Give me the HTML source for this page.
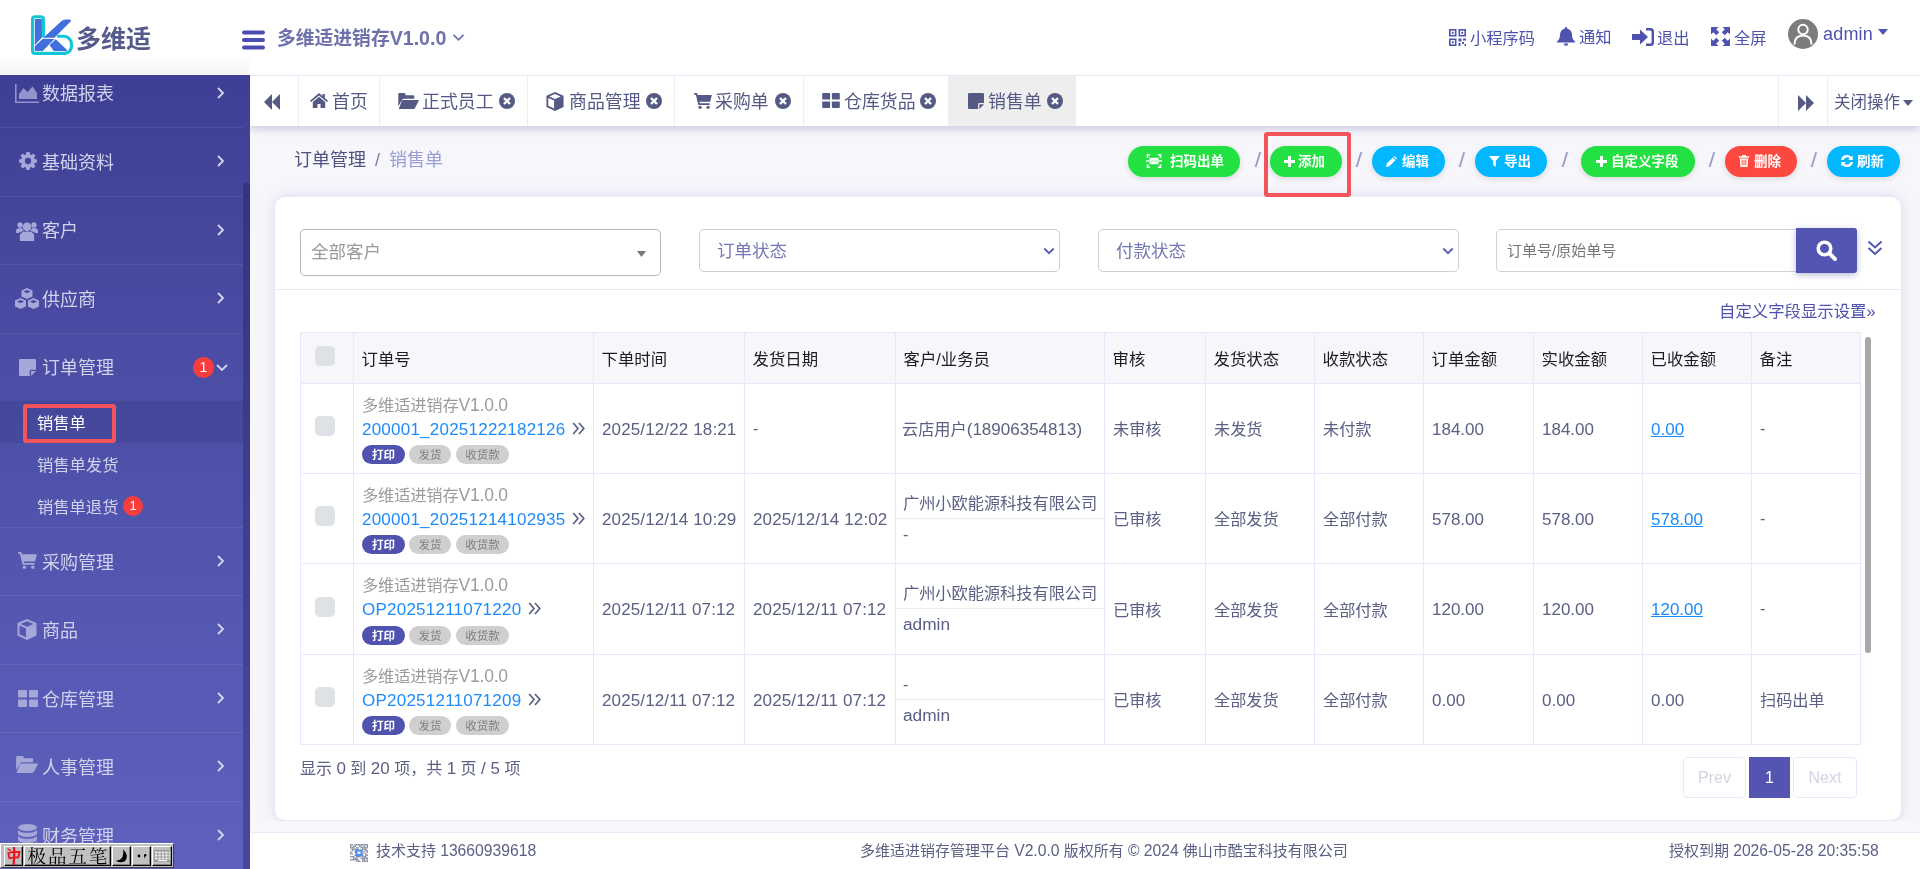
<!DOCTYPE html>
<html lang="zh-CN">
<head>
<meta charset="utf-8">
<title>多维适进销存</title>
<style>
*{box-sizing:border-box;margin:0;padding:0}
html,body{width:1920px;height:869px;overflow:hidden;background:#f6f6fb}
body{font-family:"Liberation Sans","Noto Sans CJK SC",sans-serif;font-size:16px;color:#5b6084;position:relative}
.abs{position:absolute}
body>*{will-change:transform}
svg{display:block}
a{color:inherit;text-decoration:none}

/* ---------- header ---------- */
#hdr{position:absolute;left:0;top:0;width:1920px;height:75px;background:#fff;z-index:5}
#hdr .brand{position:absolute;left:76px;top:19px;font-size:25px;font-weight:700;color:#555a8b;letter-spacing:0;line-height:40px}
#hdr .ttl{position:absolute;left:277px;top:19.200px;font-size:18.800px;font-weight:700;color:#6e71ab;line-height:38px;white-space:nowrap}
#hdr .nav{position:absolute;top:21px;font-size:16.300px;color:#4f52ae;line-height:34px;white-space:nowrap}

/* ---------- sidebar ---------- */
#side{position:absolute;left:0;top:75px;width:250px;height:794px;background:linear-gradient(180deg,#3c3f93 0%,#4a4da3 35%,#575ab4 75%,#5e61bd 100%);overflow:hidden;z-index:3}
#sideshadow{position:absolute;left:0;top:55px;width:250px;height:20px;background:linear-gradient(180deg,rgba(120,120,160,0) 0%,rgba(120,120,160,.07) 100%);z-index:6}
#side .it{position:absolute;left:0;width:243px;height:69px;border-top:1px solid rgba(255,255,255,.08);color:#d0d2ec;font-size:18px;line-height:24px}
#side .it .tx{position:absolute;left:42px;top:22.500px;white-space:nowrap}
#side .it .ic{position:absolute;left:16px;top:24px}
#side .it .ar{position:absolute;left:216px;top:26px}
#side .sub{position:absolute;left:37px;font-size:16.300px;color:#d0d2ee;line-height:22px;white-space:nowrap}
#side .sbar{position:absolute;left:243px;top:108px;width:7px;height:700px;background:rgba(22,22,80,.32);border-radius:4px 4px 0 0}
.bdg{position:absolute;background:#f93c3c;color:#fff;border-radius:50%;width:21px;height:21px;font-size:14px;line-height:21px;text-align:center}

/* ---------- tab bar ---------- */
#tabs{position:absolute;left:250px;top:75px;width:1670px;height:51px;background:#fff;border-top:1px solid #e6e6f5;box-shadow:0 3px 8px rgba(100,100,180,.30);z-index:2}
#tabs .tb{position:absolute;top:0;height:50px;border-right:1px solid #ededf7;font-size:17.900px;color:#555a85;line-height:50px;white-space:nowrap}
#tabs .tb.act{background:#eeeeee}
#tabs .tb span{position:absolute;top:.5px}

/* ---------- page ---------- */
#crumb{position:absolute;left:294px;top:146px;font-size:18px;line-height:28px;color:#4e5380;white-space:nowrap}
#crumb i{font-style:normal;color:#9a9dd6}
.pill{position:absolute;top:146px;height:31px;border-radius:15.500px;color:#fff;font-size:13.500px;font-weight:700;line-height:31.500px;white-space:nowrap;box-shadow:0 2px 6px rgba(0,0,0,.12)}
.pill span{position:absolute;top:0}
.g{background:#24e143}.b{background:#02b7fe}.r{background:#fd4840}
.sl{position:absolute;top:147.500px;font-size:21px;color:#8d90c0;line-height:24px;transform:skewX(-2deg);margin-left:1px}

#card{position:absolute;left:275px;top:197px;width:1626px;height:623px;background:#fff;border-radius:10px;box-shadow:0 0 14px rgba(130,130,200,.26)}
.fsel{position:absolute;height:43px;border:1px solid #d2d2d2;border-radius:5px;background:#fff;font-size:17px;color:#7376b4;line-height:41px;padding-left:17px}

/* ---------- filters ---------- */
.s2{position:absolute;left:300px;top:229px;width:361px;height:47px;border:1px solid #b9b9b9;border-radius:5px;background:#fff;font-size:17.500px;color:#999;line-height:45px;padding-left:10px}
.fs{position:absolute;top:229px;width:361px;height:43px;border:1px solid #cfcfcf;border-radius:5px;background:#fff;font-size:17.500px;color:#7477b5;line-height:42.600px;padding-left:17px}
.fs svg{position:absolute;right:4px;top:16.500px}
.fin{position:absolute;left:1496px;top:229px;width:301px;height:43px;border:1px solid #d2d2d2;border-radius:5px 0 0 5px;font-size:15px;color:#777;line-height:41px;padding-left:10px;background:#fff}
.fbtn{position:absolute;left:1796px;top:228px;width:61px;height:45px;background:#5255b1;border-radius:0 3px 3px 0;box-shadow:0 2px 6px rgba(60,60,140,.35)}
.hr{position:absolute;left:275px;top:289px;width:1625px;height:1px;background:#ebebf8}
.cfg{position:absolute;right:44px;top:298.500px;font-size:16.400px;line-height:24px;color:#4f52ae;white-space:nowrap}

/* ---------- table ---------- */
#tb{position:absolute;left:300px;top:332px;width:1560px;border-collapse:collapse;table-layout:fixed;font-size:16.200px;color:#5b6084}
#tb th,#tb td{border:1px solid #e8e8fb;padding:0 0 0 8px;text-align:left;vertical-align:middle;white-space:nowrap;overflow:hidden}
#tb th{height:51px;background:#f7f7fb;color:#1c1c24;font-weight:400;font-size:16.400px;padding-left:7.500px}
#tb td{height:90px;padding-bottom:1px}
#tb tr.r3 td{height:91px}
#tb td.c,#tb th.c{padding:0}
#tb td.d{font-size:17px;letter-spacing:.13px;padding-top:3px}
#tb .m{font-size:17px;letter-spacing:0}
#tb td.m{padding-top:3px}
.ck{width:20px;height:20px;border-radius:5px;background:#dee2e6;margin-left:14px}
th .ck{margin-top:-4px}
td .ck{margin-top:-5px}
.on{position:relative;height:88px}
.on .a{position:absolute;left:0;top:9.700px;font-size:16.300px;color:#9b9b9b;line-height:22px;letter-spacing:-.2px}
.on .n{position:absolute;left:0;top:33.700px;font-size:17px;color:#1c8bfb;line-height:24px;letter-spacing:.23px}
.on .n svg{display:inline-block;margin-left:6.800px;vertical-align:0}
.tg{position:absolute;top:61px;height:19px;border-radius:9.500px;font-size:11.500px;line-height:20.500px;text-align:center;letter-spacing:0}
.tg.p{left:0;width:43px;background:#4f52ae;color:#fff;font-weight:700}
.tg.q{background:#cfcfcf;color:#808080}
#tb td.cuc{vertical-align:top;padding:0}
.cu{position:relative;height:89px}
.cu div{position:absolute;left:7px;line-height:24px}
.cu i{position:absolute;left:0;top:44px;width:100%;height:1px;background:#ededf8}
a.u{color:#1c8bfb;text-decoration:underline}
.sb{position:absolute;left:1865px;top:337px;width:6px;height:316px;border-radius:3px;background:#a8a8a8}

.info{position:absolute;left:300px;top:757px;font-size:16px;line-height:24px;color:#5b6084;white-space:nowrap}
.info b{font-weight:400;font-size:17px}
.pg{position:absolute;top:757px;height:41px;border:1px solid #e8e8fa;border-radius:4px;font-size:16px;line-height:39px;text-align:center;color:#d3d3e4;background:#fff}
.pg.on1{background:#5355b0;border-color:#5355b0;color:#fff;border-radius:0}

/* ---------- footer ---------- */
#ft{position:absolute;left:250px;top:831.500px;width:1670px;height:38px;background:#fff;border-top:1px solid #e9e9f7;font-size:15px;color:#5b6084;line-height:34px;white-space:nowrap}
#ft div{position:absolute;top:.5px}
#ft b{font-weight:400;font-size:15.700px}
#ime{position:absolute;left:0;top:843px;width:174px;height:25px;background:#c0c0c0;border:1px solid;border-color:#fff #404040 #404040 #fff;z-index:9;font-family:"Liberation Serif","Noto Serif CJK SC",serif;color:#000}
#ime .k{position:absolute;top:2px;height:20px;background:#c0c0c0;border:1px solid;border-color:#fff #000 #000 #fff;box-shadow:inset -1px -1px 0 #808080}
#ime .t{position:absolute;left:2.500px;top:-4.300px;font-weight:400;font-size:18.500px;line-height:28px;letter-spacing:2px;white-space:nowrap}
#ime .v{position:absolute;top:1px;width:2px;height:21px;border-left:1px solid #808080;border-right:1px solid #fff}
</style>
</head>
<body>

<!-- ================= HEADER ================= -->
<div id="hdr">
  <svg class="abs" style="left:28px;top:12px" width="50" height="46" viewBox="0 0 50 46">
    <path d="M15.400 23.900V7.500Q15.400 4.700 12.700 4.700H7.200Q4.500 4.700 4.500 7.500V38.700Q4.500 41.400 7.200 41.400H36.500C41.200 41.400 43.600 37.500 43.600 32.800C43.600 28.200 40.400 24.300 35.800 24.300H30.300" fill="none" stroke="#12c6d6" stroke-width="3.100" stroke-linecap="round" stroke-linejoin="round"/>
    <g fill="#416fdc">
      <path d="M6.800 7.100H13.900V25.400L6.800 33.200z"/>
      <path d="M15.400 25.700L33 9.500Q35 7.600 38 7.500L41.500 7.450Q43.900 7.800 42.600 9.600L26.400 25.800z"/>
      <path d="M6.800 34.300L14.900 26.750L26.400 26.900L14.700 39.100H6.800z"/>
      <path d="M27.800 27.200L39.300 38.300L38.500 39.100H25.750L21.500 33z"/>
    </g>
  </svg>
  <div class="brand">多维适</div>
  <svg class="abs" style="left:242px;top:29.600px" width="23" height="20" viewBox="0 0 23 20"><g fill="#4b4eb0"><rect x="0" y="0.500" width="23" height="4" rx="2"/><rect x="0" y="8" width="23" height="4" rx="2"/><rect x="0" y="15.500" width="23" height="4" rx="2"/></g></svg>
  <div class="ttl">多维适进销存<span style="font-size:19.600px">V1.0.0</span></div>
  <svg class="abs" style="left:452px;top:33.300px" width="13" height="9" viewBox="0 0 13 9"><path d="M1.500 1.800l5 5 5-5" fill="none" stroke="#6e71ab" stroke-width="1.800"/></svg>

  <svg class="abs" style="left:1449px;top:29px" width="17" height="17" viewBox="0 0 17 17"><g fill="none" stroke="#4f52ae" stroke-width="1.600"><rect x=".8" y=".8" width="5.900" height="5.900"/><rect x="10.300" y=".8" width="5.900" height="5.900"/><rect x=".8" y="10.300" width="5.900" height="5.900"/></g><g fill="#4f52ae"><rect x="2.800" y="2.800" width="1.900" height="1.900"/><rect x="12.300" y="2.800" width="1.900" height="1.900"/><rect x="2.800" y="12.300" width="1.900" height="1.900"/><rect x="9.500" y="9.500" width="3" height="3"/><rect x="14" y="9.500" width="3" height="2"/><rect x="9.500" y="14" width="2" height="3"/><rect x="13" y="13" width="2" height="2"/><rect x="15.500" y="15" width="1.500" height="2"/></g></svg>
  <div class="nav" style="left:1470px">小程序码</div>
  <svg class="abs" style="left:1557px;top:27px" width="18" height="19" viewBox="0 0 18 19"><path fill="#4f52ae" d="M9 0a1.300 1.300 0 0 1 1.300 1.300v.5c2.800.6 4.700 3 4.700 6 0 3.500 1 5 3 6.700v1H0v-1c2-1.700 3-3.200 3-6.700 0-3 1.900-5.400 4.700-6v-.5A1.300 1.300 0 0 1 9 0zM6.700 16.500h4.600a2.300 2.300 0 0 1-4.600 0z"/></svg>
  <div class="nav" style="left:1579px;top:20px">通知</div>
  <svg class="abs" style="left:1632px;top:28px" width="22" height="18" viewBox="0 0 22 18"><path fill="#4f52ae" d="M8 1.500l8 7.500-8 7.500V12H0V6h8zM14 0h4.500A3.500 3.500 0 0 1 22 3.500v11a3.500 3.500 0 0 1-3.500 3.500H14v-2.400h4.100a1.500 1.500 0 0 0 1.500-1.500V3.900a1.500 1.500 0 0 0-1.500-1.500H14z"/></svg>
  <div class="nav" style="left:1657px">退出</div>
  <svg class="abs" style="left:1711px;top:27px" width="19" height="19" viewBox="0 0 19 19"><path fill="#4f52ae" d="M0 0h7.500L5.200 2.300l3 3-2.900 2.900-3-3L0 7.500zM19 0v7.500l-2.300-2.300-3 3-2.900-2.900 3-3L11.500 0zM0 19v-7.500l2.300 2.300 3-3 2.900 2.900-3 3L7.500 19zM19 19h-7.500l2.300-2.300-3-3 2.900-2.900 3 3L19 11.500z"/></svg>
  <div class="nav" style="left:1734px">全屏</div>
  <svg class="abs" style="left:1788px;top:19px" width="30" height="30" viewBox="0 0 30 30"><circle cx="15" cy="15" r="15" fill="#7c7c7c"/><circle cx="15" cy="10.500" r="4.700" fill="none" stroke="#fff" stroke-width="2"/><path d="M6.500 25.500c0-6 3.500-9 8.500-9s8.500 3 8.500 9" fill="none" stroke="#fff" stroke-width="2"/></svg>
  <div class="nav" style="left:1823px;top:16.500px;font-size:18px;letter-spacing:.2px">admin</div>
  <svg class="abs" style="left:1878px;top:29px" width="10" height="6" viewBox="0 0 10 6"><path fill="#4f52ae" d="M0 0h10L5 6z"/></svg>
</div>

<div id="sideshadow"></div>
<!-- ================= SIDEBAR ================= -->
<div id="side">
  <div class="it" style="top:-16.5px"><svg class="ic" style="left:15px;top:24px" width="24" height="19" viewBox="0 0 24 19"><path d="M1.600 0v17.400h22.400v1.600H0V0z" fill="#9295cc"/><path d="M4 15V10l4.500-6 4 4 5-5.500L22 9v6z" fill="#9295cc"/></svg><div class="tx">数据报表</div><svg class="ar" width="9" height="14" viewBox="0 0 9 14"><path d="M2 2l5 5-5 5" fill="none" stroke="#d3d5ef" stroke-width="1.800"/></svg></div>
  <div class="it" style="top:52px"><svg class="ic" style="left:19px;top:24px" width="18" height="18" viewBox="0 0 20 20"><path fill="#a4a7d8" fill-rule="evenodd" d="M8.300 0h3.400l.5 2.600 1.500.6 2.200-1.500 2.400 2.400-1.500 2.200.6 1.500 2.600.5v3.400l-2.600.5-.6 1.500 1.500 2.200-2.400 2.400-2.200-1.500-1.500.6-.5 2.600H8.300l-.5-2.600-1.500-.6-2.200 1.500-2.400-2.400 1.500-2.200-.6-1.500L0 11.700V8.300l2.600-.5.6-1.500-1.500-2.200 2.400-2.400 2.200 1.500 1.500-.6zM10 6.500a3.500 3.500 0 1 0 0 7 3.500 3.500 0 0 0 0-7z"/></svg><div class="tx">基础资料</div><svg class="ar" width="9" height="14" viewBox="0 0 9 14"><path d="M2 2l5 5-5 5" fill="none" stroke="#d3d5ef" stroke-width="1.800"/></svg></div>
  <div class="it" style="top:120.5px"><svg class="ic" style="left:16px;top:24px" width="22" height="20" viewBox="0 0 23 21"><g fill="#a4a7d8"><circle cx="11.500" cy="6" r="4.500"/><path d="M4 21v-5.500C4 12.500 7 11 11.500 11S19 12.500 19 15.500V21z"/><circle cx="4.200" cy="4.200" r="2.800"/><circle cx="18.800" cy="4.200" r="2.800"/><path d="M0 12.500V10c0-1.700 1.700-2.600 4.200-2.600.9 0 1.700.1 2.300.4C7 9 7.700 10 8.500 10.500 5 11 3.300 12 3 12.500z"/><path d="M23 12.500V10c0-1.700-1.700-2.600-4.200-2.600-.9 0-1.700.1-2.300.4-.5 1.200-1.200 2.200-2 2.700 3.500.5 5.200 1.500 5.500 2z"/></g></svg><div class="tx">客户</div><svg class="ar" width="9" height="14" viewBox="0 0 9 14"><path d="M2 2l5 5-5 5" fill="none" stroke="#d3d5ef" stroke-width="1.800"/></svg></div>
  <div class="it" style="top:189px"><svg class="ic" style="left:14px;top:23px" width="26" height="22" viewBox="0 0 26 22"><g fill="#a4a7d8"><path d="M13 0l5.500 2.500v6L13 11 7.500 8.500v-6zM13 2L9.500 3.600 13 5.200l3.500-1.600z"/><path d="M6.500 10l5.500 2.500v6L6.500 21 1 18.500v-6zM6.500 12L3 13.600l3.500 1.600 3.500-1.600z"/><path d="M19.500 10l5.500 2.500v6L19.500 21 14 18.500v-6zM19.500 12L16 13.600l3.500 1.600 3.500-1.600z"/></g></svg><div class="tx">供应商</div><svg class="ar" width="9" height="14" viewBox="0 0 9 14"><path d="M2 2l5 5-5 5" fill="none" stroke="#d3d5ef" stroke-width="1.800"/></svg></div>
  <div class="it" style="top:257.5px"><svg class="ic" style="left:19px;top:25px" width="17" height="17" viewBox="0 0 19 19"><path fill="#a4a7d8" d="M1.500 0h16A1.500 1.500 0 0 1 19 1.500V12h-5.500A1.500 1.500 0 0 0 12 13.500V19H1.500A1.500 1.500 0 0 1 0 17.500v-16A1.500 1.500 0 0 1 1.500 0zM13.500 13.500H19L13.500 19z"/></svg><div class="tx">订单管理</div><div class="bdg" style="left:193px;top:23px">1</div><svg class="ar" style="left:215px;top:29px" width="14" height="9" viewBox="0 0 14 9"><path d="M2 2l5 5 5-5" fill="none" stroke="#d3d5ef" stroke-width="1.800"/></svg></div>
  <div class="it" style="top:452px"><svg class="ic" style="left:18px;top:24px" width="19" height="17" viewBox="0 0 21 19"><g fill="#a4a7d8"><path d="M0 0h3.500l.7 2.500H21l-2 8H6.300l.4 1.800H18.500v2H5L2 2H0z"/><circle cx="7" cy="17" r="1.900"/><circle cx="16.500" cy="17" r="1.900"/></g></svg><div class="tx">采购管理</div><svg class="ar" width="9" height="14" viewBox="0 0 9 14"><path d="M2 2l5 5-5 5" fill="none" stroke="#d3d5ef" stroke-width="1.800"/></svg></div>
  <div class="it" style="top:520px"><svg class="ic" style="left:17px;top:23px" width="20" height="21" viewBox="0 0 20 21"><path fill="#a4a7d8" fill-rule="evenodd" d="M10 0l9.500 4v12.500L10 21 .5 16.500V4zM10 2.200L3.600 4.900 10 7.700l6.400-2.800zM2.500 6.500v8.800l6.500 3V9.400z"/></svg><div class="tx">商品</div><svg class="ar" width="9" height="14" viewBox="0 0 9 14"><path d="M2 2l5 5-5 5" fill="none" stroke="#d3d5ef" stroke-width="1.800"/></svg></div>
  <div class="it" style="top:589px"><svg class="ic" style="left:18px;top:25px" width="20" height="17" viewBox="0 0 20 17"><g fill="#a4a7d8"><rect x="0" y="0" width="9" height="7.500" rx="1"/><rect x="11" y="0" width="9" height="7.500" rx="1"/><rect x="0" y="9.500" width="9" height="7.500" rx="1"/><rect x="11" y="9.500" width="9" height="7.500" rx="1"/></g></svg><div class="tx">仓库管理</div><svg class="ar" width="9" height="14" viewBox="0 0 9 14"><path d="M2 2l5 5-5 5" fill="none" stroke="#d3d5ef" stroke-width="1.800"/></svg></div>
  <div class="it" style="top:657px"><svg class="ic" style="left:16px;top:23px" width="22" height="17" viewBox="0 0 23 18"><g fill="#a4a7d8"><path d="M0 15V1.500A1.500 1.500 0 0 1 1.500 0h5A1.500 1.500 0 0 1 8 1.500V2.500h8.500A1.500 1.500 0 0 1 18 4v2.500H6.500c-1 0-1.800.5-2.300 1.400z"/><path d="M5.500 8h17c.5 0 .7.400.4.900L19 16.500c-.4.800-1.200 1.500-2.200 1.500H.5l3.200-8.500C4 8.500 4.700 8 5.500 8z"/></g></svg><div class="tx">人事管理</div><svg class="ar" width="9" height="14" viewBox="0 0 9 14"><path d="M2 2l5 5-5 5" fill="none" stroke="#d3d5ef" stroke-width="1.800"/></svg></div>
  <div class="it" style="top:726px"><svg class="ic" style="left:18px;top:22px" width="19" height="22" viewBox="0 0 19 22"><g fill="#a4a7d8"><ellipse cx="9.500" cy="3.500" rx="9.500" ry="3.500"/><path d="M0 6c1.500 2 5 2.800 9.500 2.800S17.500 8 19 6v3.500c0 1.900-4.300 3.500-9.500 3.500S0 11.400 0 9.500z"/><path d="M0 12c1.500 2 5 2.800 9.500 2.800S17.500 14 19 12v3.500c0 1.900-4.300 3.500-9.500 3.500S0 17.400 0 15.500z"/><path d="M0 17.500c1.500 2 5 2.800 9.500 2.800s8-.8 9.500-2.800V19c0 1.700-4.300 3-9.500 3S0 20.700 0 19z"/></g></svg><div class="tx">财务管理</div><svg class="ar" width="9" height="14" viewBox="0 0 9 14"><path d="M2 2l5 5-5 5" fill="none" stroke="#d3d5ef" stroke-width="1.800"/></svg></div>
  <div class="abs" style="left:0;top:326px;width:243px;height:42px;background:rgba(40,42,110,.20)"></div>
  <div class="sub" style="top:337px;color:#fff">销售单</div>
  <div class="abs" style="left:22.800px;top:329px;width:93.700px;height:39px;border:4.800px solid #f3535a;border-radius:3px"></div>
  <div class="sub" style="top:379px">销售单发货</div>
  <div class="sub" style="top:421px">销售单退货</div>
  <div class="bdg" style="left:123px;top:421px;width:20px;height:20px;line-height:20px;font-size:13px">1</div>
  <div class="sbar"></div>
</div>

<!-- ================= TABS ================= -->
<div id="tabs">
  <div class="tb" style="left:0;width:49px"><svg class="abs" style="left:14px;top:18px" width="16" height="16" viewBox="0 0 16 16"><path fill="#555a85" d="M8 0v16L0 8zM16 0v16L8 8z"/></svg></div>
  <div class="tb" style="left:49px;width:81px"><svg class="abs" style="left:11px;top:17px" width="18" height="15" viewBox="0 0 18 15"><path fill="#555a85" d="M9 0l3.500 3V1h2.300v4L18 7.800l-1.100 1.300L9 2.500 1.100 9.100 0 7.800zM9 3.800l6.200 5.100V15h-4.700v-4H7.500v4H2.800V8.900z"/></svg><span style="left:33px">首页</span></div>
  <div class="tb" style="left:130px;width:148px"><svg class="abs" style="left:18px;top:17px" width="21" height="16" viewBox="0 0 23 18"><g fill="#555a85"><path d="M0 15V1.500A1.500 1.500 0 0 1 1.500 0h5A1.500 1.500 0 0 1 8 1.500V2.500h8.500A1.500 1.500 0 0 1 18 4v2.500H6.500c-1 0-1.800.5-2.300 1.400z"/><path d="M5.500 8h17c.5 0 .7.400.4.900L19 16.500c-.4.800-1.200 1.500-2.200 1.500H.5l3.200-8.500C4 8.500 4.700 8 5.500 8z"/></g></svg><span style="left:42px">正式员工</span><svg class="abs" style="left:119px;top:17px" width="16" height="16" viewBox="0 0 16 16"><circle cx="8" cy="8" r="8" fill="#555a85"/><path d="M5 5l6 6M11 5l-6 6" stroke="#fff" stroke-width="2.400"/></svg></div>
  <div class="tb" style="left:278px;width:147px"><svg class="abs" style="left:18px;top:16px" width="18" height="19" viewBox="0 0 20 21"><path fill="#555a85" fill-rule="evenodd" d="M10 0l9.500 4v12.500L10 21 .5 16.500V4zM10 2.200L3.600 4.900 10 7.700l6.400-2.800zM2.500 6.500v8.800l6.500 3V9.400z"/></svg><span style="left:41px">商品管理</span><svg class="abs" style="left:118px;top:17px" width="16" height="16" viewBox="0 0 16 16"><circle cx="8" cy="8" r="8" fill="#555a85"/><path d="M5 5l6 6M11 5l-6 6" stroke="#fff" stroke-width="2.400"/></svg></div>
  <div class="tb" style="left:425px;width:129px"><svg class="abs" style="left:19px;top:17px" width="18" height="16" viewBox="0 0 21 19"><g fill="#555a85"><path d="M0 0h3.500l.7 2.500H21l-2 8H6.300l.4 1.800H18.500v2H5L2 2H0z"/><circle cx="7" cy="17" r="1.900"/><circle cx="16.500" cy="17" r="1.900"/></g></svg><span style="left:40px">采购单</span><svg class="abs" style="left:100px;top:17px" width="16" height="16" viewBox="0 0 16 16"><circle cx="8" cy="8" r="8" fill="#555a85"/><path d="M5 5l6 6M11 5l-6 6" stroke="#fff" stroke-width="2.400"/></svg></div>
  <div class="tb" style="left:554px;width:145px"><svg class="abs" style="left:18px;top:17px" width="18" height="15" viewBox="0 0 20 17"><g fill="#555a85"><rect x="0" y="0" width="9" height="7.500" rx="1"/><rect x="11" y="0" width="9" height="7.500" rx="1"/><rect x="0" y="9.500" width="9" height="7.500" rx="1"/><rect x="11" y="9.500" width="9" height="7.500" rx="1"/></g></svg><span style="left:40px">仓库货品</span><svg class="abs" style="left:116px;top:17px" width="16" height="16" viewBox="0 0 16 16"><circle cx="8" cy="8" r="8" fill="#555a85"/><path d="M5 5l6 6M11 5l-6 6" stroke="#fff" stroke-width="2.400"/></svg></div>
  <div class="tb act" style="left:699px;width:127px;border-right:0"><svg class="abs" style="left:19px;top:17px" width="16" height="16" viewBox="0 0 19 19"><path fill="#555a85" d="M1.500 0h16A1.500 1.500 0 0 1 19 1.500V12h-5.500A1.500 1.500 0 0 0 12 13.500V19H1.500A1.500 1.500 0 0 1 0 17.500v-16A1.500 1.500 0 0 1 1.500 0zM13.500 13.500H19L13.500 19z"/></svg><span style="left:39px">销售单</span><svg class="abs" style="left:98px;top:17px" width="16" height="16" viewBox="0 0 16 16"><circle cx="8" cy="8" r="8" fill="#555a85"/><path d="M5 5l6 6M11 5l-6 6" stroke="#fff" stroke-width="2.400"/></svg></div>
  <div class="tb" style="left:1528px;width:50px;border-left:1px solid #ededf7"><svg class="abs" style="left:18.700px;top:18.500px" width="16" height="16" viewBox="0 0 16 16"><path fill="#555a85" d="M0 0l8 8-8 8zM8 0l8 8-8 8z"/></svg></div>
  <div class="tb" style="left:1577px;width:93px;border-right:0;font-size:16.500px"><span style="left:7px">关闭操作</span><svg class="abs" style="left:76px;top:24px" width="10" height="6" viewBox="0 0 10 6"><path fill="#555a85" d="M0 0h10L5 6z"/></svg></div>
</div>

<!-- ================= PAGE ================= -->
<div id="crumb">订单管理 <span style="color:#7b7fa6;margin:0 4px">/</span> <i>销售单</i></div>


<div class="pill g" style="left:1128px;width:112px"><svg class="abs" style="left:18px;top:8px" width="16" height="14" viewBox="0 0 16 14"><g fill="none" stroke="#fff" stroke-width="1.600"><path d="M4 .8H1.500v3M12 .8h2.500v3M4 13.200H1.500v-3M12 13.200h2.500v-3"/></g><rect x="3.500" y="3.800" width="9" height="2.400" fill="#fff"/><rect x="3.500" y="7.800" width="9" height="2.400" fill="#fff"/><rect x="0" y="6.300" width="16" height="1.400" fill="#fff"/></svg><span style="left:42px">扫码出单</span></div>
<div class="sl" style="left:1254px">/</div>
<div class="pill g" style="left:1270px;width:72px"><svg class="abs" style="left:13.5px;top:10px" width="11" height="11" viewBox="0 0 11 11"><path d="M5.500 0v11M0 5.500h11" stroke="#fff" stroke-width="3"/></svg><span style="left:28px">添加</span></div>
<div class="abs" style="left:1264px;top:131.800px;width:87.400px;height:65px;border:4.800px solid #f3535a;border-radius:3px;z-index:4"></div>
<div class="sl" style="left:1355px">/</div>
<div class="pill b" style="left:1372px;width:73px"><svg class="abs" style="left:14px;top:10px" width="11" height="11" viewBox="0 0 11 11"><path fill="#fff" d="M0 11l.8-3.400 6-6 2.600 2.600-6 6zM7.600.8l.8-.8 2.600 2.600-.8.8z"/></svg><span style="left:30px">编辑</span></div>
<div class="sl" style="left:1458px">/</div>
<div class="pill b" style="left:1475px;width:72px"><svg class="abs" style="left:14px;top:10px" width="11" height="11" viewBox="0 0 11 11"><path fill="#fff" d="M0 0h11L6.800 5v6L4.200 9V5z"/></svg><span style="left:29px">导出</span></div>
<div class="sl" style="left:1561px">/</div>
<div class="pill g" style="left:1581px;width:114px"><svg class="abs" style="left:14.5px;top:10px" width="11" height="11" viewBox="0 0 11 11"><path d="M5.500 0v11M0 5.500h11" stroke="#fff" stroke-width="3"/></svg><span style="left:30px">自定义字段</span></div>
<div class="sl" style="left:1708px">/</div>
<div class="pill r" style="left:1725px;width:72px"><svg class="abs" style="left:14px;top:9px" width="10" height="12" viewBox="0 0 10 12"><path fill="#fff" fill-rule="evenodd" d="M3.300 0h3.400l.5 1.200H10v1.500H0V1.200h2.800zM.8 3.500h8.400l-.6 8c0 .3-.3.5-.6.500H2c-.3 0-.6-.2-.6-.500zM2.700 4.800v5.400h.9V4.800zM4.550 4.800v5.400h.9V4.800zM6.400 4.800v5.400h.9V4.800z"/></svg><span style="left:29px">删除</span></div>
<div class="sl" style="left:1810px">/</div>
<div class="pill b" style="left:1827px;width:73px"><svg class="abs" style="left:14px;top:9px" width="12" height="12" viewBox="0 0 12 12"><path fill="#fff" d="M6 0a6 6 0 0 1 4.300 1.800L11.700.4V5H7.100l1.600-1.600A3.600 3.600 0 0 0 2.600 5H0A6 6 0 0 1 6 0zM12 7a6 6 0 0 1-10.300 3.200L.3 11.600V7h4.600L3.300 8.600A3.600 3.600 0 0 0 9.400 7z"/></svg><span style="left:30px">刷新</span></div>

<div id="card"></div>
<div class="abs" style="left:250px;top:820.500px;width:1670px;height:11px;background:#f6f6fb"></div>

<div class="s2">全部客户<svg class="abs" style="left:336px;top:21px" width="9" height="6" viewBox="0 0 9 6"><path d="M0 0h9L4.500 6z" fill="#777"/></svg></div>
<div class="fs" style="left:699px">订单状态<svg width="12" height="8" viewBox="0 0 12 8"><path d="M1.300 1.500L6 6.200l4.700-4.700" fill="none" stroke="#5b5fb0" stroke-width="1.900"/></svg></div>
<div class="fs" style="left:1098px">付款状态<svg width="12" height="8" viewBox="0 0 12 8"><path d="M1.300 1.500L6 6.200l4.700-4.700" fill="none" stroke="#5b5fb0" stroke-width="1.900"/></svg></div>
<div class="fin">订单号/原始单号</div>
<div class="fbtn"><svg class="abs" style="left:20px;top:12px" width="21" height="21" viewBox="0 0 21 21"><circle cx="8.500" cy="8.500" r="6.300" fill="none" stroke="#fff" stroke-width="3.500"/><path d="M13.400 13.400l5.600 5.600" stroke="#fff" stroke-width="3.900" stroke-linecap="round"/></svg></div>
<svg class="abs" style="left:1867px;top:240px" width="16" height="16" viewBox="0 0 16 16"><path d="M1.500 1.500L8 7.500l6.500-6M1.500 8L8 14l6.500-6" fill="none" stroke="#4f52ae" stroke-width="1.800"/></svg>
<div class="hr"></div>
<div class="cfg">自定义字段显示设置»</div>

<table id="tb">
<colgroup><col style="width:53px"><col style="width:240px"><col style="width:151px"><col style="width:151px"><col style="width:209px"><col style="width:101px"><col style="width:109px"><col style="width:109px"><col style="width:110px"><col style="width:109px"><col style="width:109px"><col style="width:109px"></colgroup>
<thead><tr><th class="c"><div class="ck"></div></th><th>订单号</th><th>下单时间</th><th>发货日期</th><th>客户/业务员</th><th>审核</th><th>发货状态</th><th>收款状态</th><th>订单金额</th><th>实收金额</th><th>已收金额</th><th>备注</th></tr></thead>
<tbody>
<tr><td class="c"><div class="ck"></div></td>
<td><div class="on"><div class="a">多维适进销存<span style="font-size:17.500px">V1.0.0</span></div><div class="n">200001_20251222182126<svg width="13" height="13" viewBox="0 0 13 13"><path d="M1.200 1L6 6.500 1.200 12M7 1l4.800 5.500L7 12" fill="none" stroke="#5b6084" stroke-width="1.700"/></svg></div><div class="tg p">打印</div><div class="tg q" style="left:47px;width:42px">发货</div><div class="tg q" style="left:94px;width:53px">收货款</div></div></td>
<td class="d">2025/12/22 18:21</td><td>-</td><td><span style="margin-left:-2px">云店用户<span class="m">(18906354813)</span></span></td><td>未审核</td><td>未发货</td><td>未付款</td><td class="m">184.00</td><td class="m">184.00</td><td class="m"><a class="u">0.00</a></td><td>-</td></tr>
<tr><td class="c"><div class="ck"></div></td>
<td><div class="on"><div class="a">多维适进销存<span style="font-size:17.500px">V1.0.0</span></div><div class="n">200001_20251214102935<svg width="13" height="13" viewBox="0 0 13 13"><path d="M1.200 1L6 6.500 1.200 12M7 1l4.800 5.500L7 12" fill="none" stroke="#5b6084" stroke-width="1.700"/></svg></div><div class="tg p">打印</div><div class="tg q" style="left:47px;width:42px">发货</div><div class="tg q" style="left:94px;width:53px">收货款</div></div></td>
<td class="d">2025/12/14 10:29</td><td class="d">2025/12/14 12:02</td><td class="cuc"><div class="cu"><div style="top:16.500px">广州小欧能源科技有限公司</div><i></i><div style="top:47.500px">-</div></div></td><td>已审核</td><td>全部发货</td><td>全部付款</td><td class="m">578.00</td><td class="m">578.00</td><td class="m"><a class="u">578.00</a></td><td>-</td></tr>
<tr class="r3"><td class="c"><div class="ck"></div></td>
<td><div class="on"><div class="a">多维适进销存<span style="font-size:17.500px">V1.0.0</span></div><div class="n">OP20251211071220<svg width="13" height="13" viewBox="0 0 13 13"><path d="M1.200 1L6 6.500 1.200 12M7 1l4.800 5.500L7 12" fill="none" stroke="#5b6084" stroke-width="1.700"/></svg></div><div class="tg p">打印</div><div class="tg q" style="left:47px;width:42px">发货</div><div class="tg q" style="left:94px;width:53px">收货款</div></div></td>
<td class="d">2025/12/11 07:12</td><td class="d">2025/12/11 07:12</td><td class="cuc"><div class="cu"><div style="top:16.500px">广州小欧能源科技有限公司</div><i></i><div style="top:47.500px;font-size:17.300px">admin</div></div></td><td>已审核</td><td>全部发货</td><td>全部付款</td><td class="m">120.00</td><td class="m">120.00</td><td class="m"><a class="u">120.00</a></td><td>-</td></tr>
<tr><td class="c"><div class="ck"></div></td>
<td><div class="on"><div class="a">多维适进销存<span style="font-size:17.500px">V1.0.0</span></div><div class="n">OP20251211071209<svg width="13" height="13" viewBox="0 0 13 13"><path d="M1.200 1L6 6.500 1.200 12M7 1l4.800 5.500L7 12" fill="none" stroke="#5b6084" stroke-width="1.700"/></svg></div><div class="tg p">打印</div><div class="tg q" style="left:47px;width:42px">发货</div><div class="tg q" style="left:94px;width:53px">收货款</div></div></td>
<td class="d">2025/12/11 07:12</td><td class="d">2025/12/11 07:12</td><td class="cuc"><div class="cu"><div style="top:16.500px">-</div><i></i><div style="top:47.500px;font-size:17.300px">admin</div></div></td><td>已审核</td><td>全部发货</td><td>全部付款</td><td class="m">0.00</td><td class="m">0.00</td><td class="m">0.00</td><td>扫码出单</td></tr>
</tbody>
</table>
<div class="sb"></div>

<div class="info">显示 <b>0</b> 到 <b>20</b> 项，共 <b>1</b> 页 <b>/ 5</b> 项</div>
<div class="pg" style="left:1683px;width:63px">Prev</div>
<div class="pg on1" style="left:1749px;width:41px">1</div>
<div class="pg" style="left:1793px;width:64px">Next</div>

<div id="ft">
  <svg class="abs" style="left:100px;top:10.500px" width="18" height="18" viewBox="0 0 18 18"><g fill="#8d91a6"><rect x="0.0" y="0.0" width="1.500" height="1.500"/><rect x="1.5" y="0.0" width="1.500" height="1.500"/><rect x="4.5" y="0.0" width="1.500" height="1.500"/><rect x="6.0" y="0.0" width="1.500" height="1.500"/><rect x="7.5" y="0.0" width="1.500" height="1.500"/><rect x="9.0" y="0.0" width="1.500" height="1.500"/><rect x="10.5" y="0.0" width="1.500" height="1.500"/><rect x="12.0" y="0.0" width="1.500" height="1.500"/><rect x="13.5" y="0.0" width="1.500" height="1.500"/><rect x="15.0" y="0.0" width="1.500" height="1.500"/><rect x="16.5" y="0.0" width="1.500" height="1.500"/><rect x="0.0" y="1.5" width="1.500" height="1.500"/><rect x="3.0" y="1.5" width="1.500" height="1.500"/><rect x="4.5" y="1.5" width="1.500" height="1.500"/><rect x="9.0" y="1.5" width="1.500" height="1.500"/><rect x="10.5" y="1.5" width="1.500" height="1.500"/><rect x="13.5" y="1.5" width="1.500" height="1.500"/><rect x="16.5" y="1.5" width="1.500" height="1.500"/><rect x="0.0" y="3.0" width="1.500" height="1.500"/><rect x="1.5" y="3.0" width="1.500" height="1.500"/><rect x="3.0" y="3.0" width="1.500" height="1.500"/><rect x="6.0" y="3.0" width="1.500" height="1.500"/><rect x="7.5" y="3.0" width="1.500" height="1.500"/><rect x="10.5" y="3.0" width="1.500" height="1.500"/><rect x="12.0" y="3.0" width="1.500" height="1.500"/><rect x="13.5" y="3.0" width="1.500" height="1.500"/><rect x="15.0" y="3.0" width="1.500" height="1.500"/><rect x="16.5" y="3.0" width="1.500" height="1.500"/><rect x="1.5" y="4.5" width="1.500" height="1.500"/><rect x="3.0" y="4.5" width="1.500" height="1.500"/><rect x="4.5" y="4.5" width="1.500" height="1.500"/><rect x="6.0" y="4.5" width="1.500" height="1.500"/><rect x="7.5" y="4.5" width="1.500" height="1.500"/><rect x="12.0" y="4.5" width="1.500" height="1.500"/><rect x="13.5" y="4.5" width="1.500" height="1.500"/><rect x="15.0" y="4.5" width="1.500" height="1.500"/><rect x="1.5" y="6.0" width="1.500" height="1.500"/><rect x="4.5" y="6.0" width="1.500" height="1.500"/><rect x="12.0" y="6.0" width="1.500" height="1.500"/><rect x="15.0" y="6.0" width="1.500" height="1.500"/><rect x="16.5" y="6.0" width="1.500" height="1.500"/><rect x="0.0" y="7.5" width="1.500" height="1.500"/><rect x="4.5" y="7.5" width="1.500" height="1.500"/><rect x="13.5" y="7.5" width="1.500" height="1.500"/><rect x="16.5" y="7.5" width="1.500" height="1.500"/><rect x="0.0" y="9.0" width="1.500" height="1.500"/><rect x="1.5" y="9.0" width="1.500" height="1.500"/><rect x="12.0" y="9.0" width="1.500" height="1.500"/><rect x="15.0" y="9.0" width="1.500" height="1.500"/><rect x="4.5" y="10.5" width="1.500" height="1.500"/><rect x="12.0" y="10.5" width="1.500" height="1.500"/><rect x="15.0" y="10.5" width="1.500" height="1.500"/><rect x="16.5" y="10.5" width="1.500" height="1.500"/><rect x="0.0" y="12.0" width="1.500" height="1.500"/><rect x="1.5" y="12.0" width="1.500" height="1.500"/><rect x="3.0" y="12.0" width="1.500" height="1.500"/><rect x="6.0" y="12.0" width="1.500" height="1.500"/><rect x="7.5" y="12.0" width="1.500" height="1.500"/><rect x="9.0" y="12.0" width="1.500" height="1.500"/><rect x="12.0" y="12.0" width="1.500" height="1.500"/><rect x="13.5" y="12.0" width="1.500" height="1.500"/><rect x="15.0" y="12.0" width="1.500" height="1.500"/><rect x="3.0" y="13.5" width="1.500" height="1.500"/><rect x="4.5" y="13.5" width="1.500" height="1.500"/><rect x="6.0" y="13.5" width="1.500" height="1.500"/><rect x="10.5" y="13.5" width="1.500" height="1.500"/><rect x="12.0" y="13.5" width="1.500" height="1.500"/><rect x="13.5" y="13.5" width="1.500" height="1.500"/><rect x="15.0" y="13.5" width="1.500" height="1.500"/><rect x="16.5" y="13.5" width="1.500" height="1.500"/><rect x="0.0" y="15.0" width="1.500" height="1.500"/><rect x="1.5" y="15.0" width="1.500" height="1.500"/><rect x="3.0" y="15.0" width="1.500" height="1.500"/><rect x="4.5" y="15.0" width="1.500" height="1.500"/><rect x="6.0" y="15.0" width="1.500" height="1.500"/><rect x="7.5" y="15.0" width="1.500" height="1.500"/><rect x="12.0" y="15.0" width="1.500" height="1.500"/><rect x="13.5" y="15.0" width="1.500" height="1.500"/><rect x="16.5" y="15.0" width="1.500" height="1.500"/><rect x="6.0" y="16.5" width="1.500" height="1.500"/><rect x="7.5" y="16.5" width="1.500" height="1.500"/><rect x="9.0" y="16.5" width="1.500" height="1.500"/><rect x="12.0" y="16.5" width="1.500" height="1.500"/><rect x="13.5" y="16.5" width="1.500" height="1.500"/><rect x="15.0" y="16.5" width="1.500" height="1.500"/><rect x="16.5" y="16.5" width="1.500" height="1.500"/></g><rect x="5.500" y="5.500" width="7" height="7" rx="1" fill="#4c8ff0"/><rect x="7.500" y="7.500" width="3" height="2.500" fill="#e8f0ff"/></svg>
  <div style="left:126px">技术支持 <b>13660939618</b></div>
  <div style="left:610px">多维适进销存管理平台 <b>V2.0.0</b> 版权所有 <b>© 2024</b> 佛山市酷宝科技有限公司</div>
  <div style="left:1419px">授权到期 <b>2026-05-28 20:35:58</b></div>
</div>

<div id="ime">
  <div class="k" style="left:3px;width:19px"><svg class="abs" style="left:1px;top:0" width="16" height="18" viewBox="0 0 16 18"><g fill="none" stroke="#f0101c" stroke-linecap="round" stroke-linejoin="round"><path d="M2.300 6Q8 4.300 13.500 5L12.300 10.500Q8 10.200 3.400 11.300z" stroke-width="1.800"/><path d="M8 .8Q8.600 8.500 7.600 17" stroke-width="2.200"/><path d="M2 2L4.500 3.600" stroke-width="1.300"/></g></svg></div>
  <div class="k" style="left:23px;width:87px"><div class="t">极品五笔</div></div>
  <div class="k" style="left:111px;width:19px"><svg class="abs" style="left:2px;top:2px" width="14" height="15" viewBox="0 0 14 15"><path d="M8 .5Q13 5 11.500 9.500Q9.500 14.500 3.500 13Q2 12.500 1 11.500Q5.500 11.500 7.500 8Q9 4.500 8 .5z" fill="#000"/></svg></div>
  <div class="k" style="left:131px;width:19px"><svg class="abs" style="left:2px;top:3px" width="14" height="14" viewBox="0 0 14 14"><circle cx="4" cy="6" r="1.400" fill="#000"/><path d="M9 4.700a1.300 1.300 0 1 1 1.300 1.800L9.300 8.500z" fill="#000"/></svg></div>
  <div class="k" style="left:151px;width:20px"><svg class="abs" style="left:1px;top:3px" width="17" height="12" viewBox="0 0 17 12"><rect x="0" y="0" width="17" height="12" fill="#9a9a9a"/><path d="M1 2.500h15M1 5.500h15M1 8.500h15" stroke="#f2f2f2" stroke-width="1.800" stroke-dasharray="2.400 1"/><rect x="4" y="10" width="9" height="1.200" fill="#f2f2f2"/></svg></div>
</div>


</body>
</html>
